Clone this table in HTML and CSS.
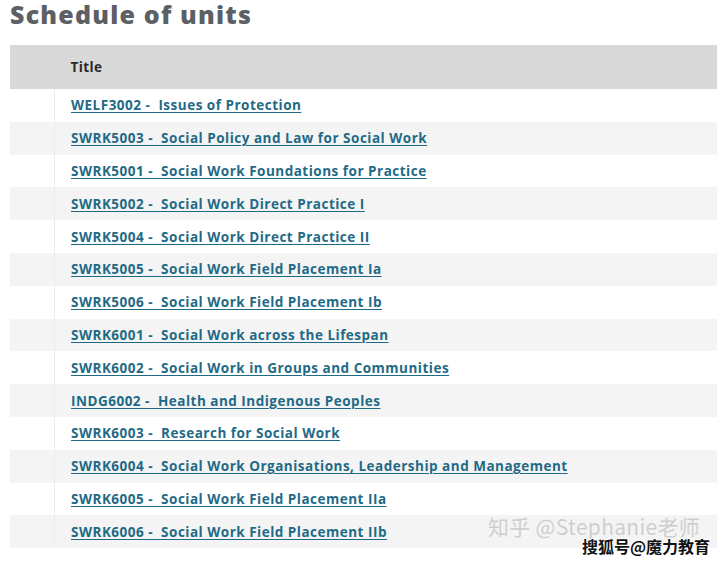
FILE: index.html
```html
<!DOCTYPE html>
<html lang="en">
<head>
<meta charset="utf-8">
<title>Schedule of units</title>
<link rel="stylesheet" href="styles.css">
</head>
<body>
<main class="page">
  <h1 class="heading">Schedule of units</h1>
  <table class="units">
    <thead>
      <tr><th class="gutter"></th><th class="title-col">Title</th></tr>
    </thead>
    <tbody>
      <tr><td class="gutter"></td><td><a href="#">WELF3002 -&nbsp; Issues of Protection</a></td></tr>
      <tr><td class="gutter"></td><td><a href="#">SWRK5003 -&nbsp; Social Policy and Law for Social Work</a></td></tr>
      <tr><td class="gutter"></td><td><a href="#">SWRK5001 -&nbsp; Social Work Foundations for Practice</a></td></tr>
      <tr><td class="gutter"></td><td><a href="#">SWRK5002 -&nbsp; Social Work Direct Practice I</a></td></tr>
      <tr><td class="gutter"></td><td><a href="#">SWRK5004 -&nbsp; Social Work Direct Practice II</a></td></tr>
      <tr><td class="gutter"></td><td><a href="#">SWRK5005 -&nbsp; Social Work Field Placement Ia</a></td></tr>
      <tr><td class="gutter"></td><td><a href="#">SWRK5006 -&nbsp; Social Work Field Placement Ib</a></td></tr>
      <tr><td class="gutter"></td><td><a href="#">SWRK6001 -&nbsp; Social Work across the Lifespan</a></td></tr>
      <tr><td class="gutter"></td><td><a href="#">SWRK6002 -&nbsp; Social Work in Groups and Communities</a></td></tr>
      <tr><td class="gutter"></td><td><a href="#">INDG6002 -&nbsp; Health and Indigenous Peoples</a></td></tr>
      <tr><td class="gutter"></td><td><a href="#">SWRK6003 -&nbsp; Research for Social Work</a></td></tr>
      <tr><td class="gutter"></td><td><a href="#">SWRK6004 -&nbsp; Social Work Organisations, Leadership and Management</a></td></tr>
      <tr><td class="gutter"></td><td><a href="#">SWRK6005 -&nbsp; Social Work Field Placement IIa</a></td></tr>
      <tr><td class="gutter"></td><td><a href="#">SWRK6006 -&nbsp; Social Work Field Placement IIb</a></td></tr>
    </tbody>
  </table>
  <div class="wm-zhihu">知乎 @Stephanie老师</div>
  <div class="wm-sohu">搜狐号@魔力教育</div>
</main>
</body>
</html>
```

FILE: styles.css
```css
html, body {
  margin: 0;
  padding: 0;
  background: #ffffff;
}
.page {
  position: relative;
  width: 720px;
  height: 562px;
  overflow: hidden;
  font-family: "Open Sans", "Noto Sans", sans-serif;
}
.heading {
  box-sizing: border-box;
  margin: 0;
  padding: 0 0 0 10px;
  height: 45px;
  line-height: 28px;
  font-size: 25px;
  font-weight: 800;
  color: #5c5f64;
  letter-spacing: 1.2px;
}
.units {
  margin-left: 10px;
  width: 707px;
  border-collapse: collapse;
  font-size: 13.5px;
}
.units thead tr {
  height: 44px;
  background: #d9d9d9;
}
.units th {
  text-align: left;
  font-weight: 700;
  color: #2a2a2a;
  padding: 0;
  letter-spacing: 0.4px;
}
.units .title-col {
  padding-left: 16px;
}
.units tbody tr {
  height: 32.8px;
  background: #ffffff;
}
.units tbody tr:nth-child(even) {
  background: #f4f4f4;
}
.units td {
  padding: 0 0 0 16px;
  vertical-align: middle;
}
.units td.gutter,
.units th.gutter {
  width: 44px;
  padding: 0;
  border-right: 1px solid #ececec;
}
.units th.gutter {
  border-right: none;
}
.units a {
  color: #1f6a86;
  font-weight: 700;
  text-decoration: underline;
  text-underline-offset: 2px;
  text-decoration-thickness: 1px;
  letter-spacing: 0.5px;
}
.wm-zhihu {
  position: absolute;
  left: 488px;
  top: 512px;
  font-family: "Noto Sans CJK SC", "Noto Sans", sans-serif;
  font-size: 21px;
  line-height: 28px;
  color: rgba(200, 200, 200, 0.85);
  letter-spacing: 0.3px;
  white-space: nowrap;
}
.wm-sohu {
  position: absolute;
  left: 582px;
  top: 536px;
  font-family: "Noto Sans CJK SC", sans-serif;
  font-size: 16px;
  line-height: 20px;
  font-weight: 700;
  color: #111111;
  white-space: nowrap;
  text-shadow: 1px 0 #fff, -1px 0 #fff, 0 1px #fff, 0 -1px #fff;
}
```
